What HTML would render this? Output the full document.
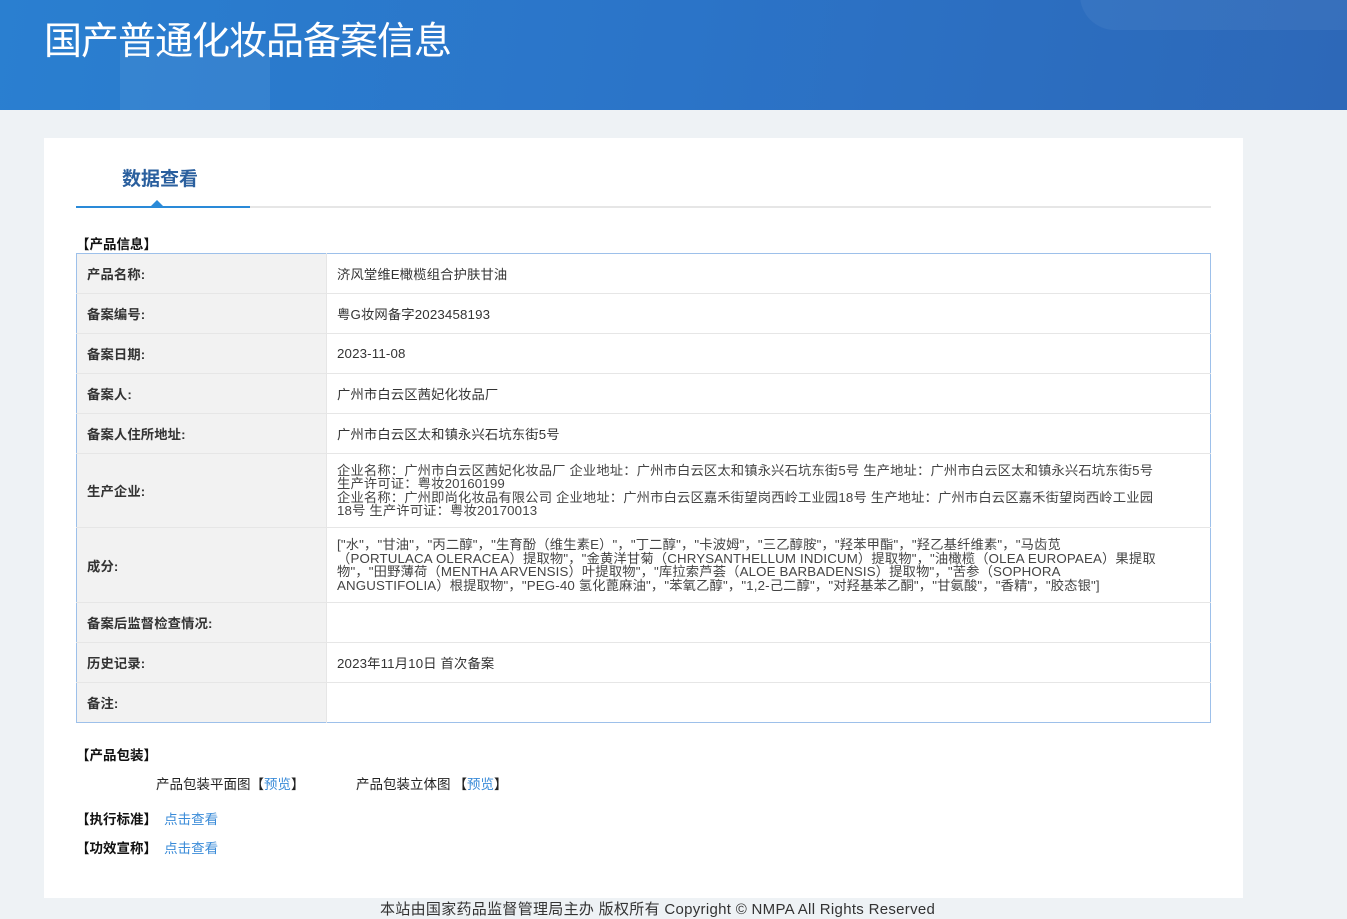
<!DOCTYPE html>
<html><head><meta charset="utf-8"><style>
*{margin:0;padding:0;box-sizing:border-box}
body{width:1347px;height:914px;overflow:hidden;background:#eef2f5;font-family:"Liberation Sans","Noto Sans CJK SC",sans-serif;color:#333;position:relative}
.hdr{position:absolute;left:0;top:0;width:1347px;height:110px;background:linear-gradient(100deg,#2a7fd0 0%,#2b74c8 50%,#2d68b8 100%);overflow:hidden}
.hdr h1{position:absolute;left:44px;top:10px;font-size:38px;font-weight:normal;color:#fff;font-family:"Noto Sans CJK SC",sans-serif;letter-spacing:-1px}
.card{position:absolute;left:44px;top:138px;width:1199px;height:760px;background:#fff}
.tab{position:absolute;left:122px;top:164px;font-size:19px;font-weight:bold;color:#2a5f9e;font-family:"Noto Sans CJK SC",sans-serif}
.line{position:absolute;left:76px;top:206px;width:1135px;height:2px;background:#e6e6e6}
.line2{position:absolute;left:76px;top:206px;width:174px;height:2px;background:#2a8ad8}
.tri{position:absolute;left:151px;top:200px;width:0;height:0;border-left:6px solid transparent;border-right:6px solid transparent;border-bottom:6px solid #2a8ad8}
.sec{position:absolute;left:76px;font-size:13.5px;font-weight:bold;color:#111;font-family:"Noto Sans CJK SC",sans-serif}
table{position:absolute;left:76px;top:253px;width:1135px;border-collapse:collapse;border:1px solid #9dc0ea;font-size:13.3px}
td{border-bottom:1px solid #e6e6e6;padding:0 10px;height:40px;vertical-align:middle;font-family:"Liberation Sans","Noto Sans CJK SC",sans-serif;letter-spacing:0.15px}
td.l{width:250px;background:#f2f2f2;font-weight:bold;color:#333;border-right:1px solid #e6e6e6}
td.m{line-height:13.5px;color:#444}
a{color:#3a8bd8;text-decoration:none}
.txt{position:absolute;font-size:13.5px;color:#222;font-family:"Noto Sans CJK SC",sans-serif}
.foot{position:absolute;left:380px;top:898px;font-size:15px;color:#333;font-family:"Liberation Sans","Noto Sans CJK SC",sans-serif;letter-spacing:0.3px}
</style></head><body>
<div class="hdr"><h1>国产普通化妆品备案信息</h1>
<div style="position:absolute;left:1080px;top:-40px;width:300px;height:70px;border-radius:40px;background:rgba(255,255,255,0.05)"></div>
<div style="position:absolute;left:120px;top:50px;width:150px;height:60px;background:rgba(255,255,255,0.06)"></div></div>
<div class="card"></div>
<div class="tab">数据查看</div>
<div class="line"></div><div class="line2"></div><div class="tri"></div>
<div class="sec" style="top:233px">【产品信息】</div>
<table>
<tr><td class="l">产品名称:</td><td>济风堂维E橄榄组合护肤甘油</td></tr>
<tr><td class="l">备案编号:</td><td>粤G妆网备字2023458193</td></tr>
<tr><td class="l">备案日期:</td><td>2023-11-08</td></tr>
<tr><td class="l">备案人:</td><td>广州市白云区茜妃化妆品厂</td></tr>
<tr><td class="l">备案人住所地址:</td><td>广州市白云区太和镇永兴石坑东街5号</td></tr>
<tr><td class="l" style="height:74px">生产企业:</td><td class="m">企业名称：广州市白云区茜妃化妆品厂 企业地址：广州市白云区太和镇永兴石坑东街5号 生产地址：广州市白云区太和镇永兴石坑东街5号<br>生产许可证：粤妆20160199<br>企业名称：广州即尚化妆品有限公司 企业地址：广州市白云区嘉禾街望岗西岭工业园18号 生产地址：广州市白云区嘉禾街望岗西岭工业园<br>18号 生产许可证：粤妆20170013</td></tr>
<tr><td class="l" style="height:75px">成分:</td><td class="m">["水"，"甘油"，"丙二醇"，"生育酚（维生素E）"，"丁二醇"，"卡波姆"，"三乙醇胺"，"羟苯甲酯"，"羟乙基纤维素"，"马齿苋<br>（PORTULACA OLERACEA）提取物"，"金黄洋甘菊（CHRYSANTHELLUM INDICUM）提取物"，"油橄榄（OLEA EUROPAEA）果提取<br>物"，"田野薄荷（MENTHA ARVENSIS）叶提取物"，"库拉索芦荟（ALOE BARBADENSIS）提取物"，"苦参（SOPHORA<br>ANGUSTIFOLIA）根提取物"，"PEG-40 氢化蓖麻油"，"苯氧乙醇"，"1,2-己二醇"，"对羟基苯乙酮"，"甘氨酸"，"香精"，"胶态银"]</td></tr>
<tr><td class="l">备案后监督检查情况:</td><td></td></tr>
<tr><td class="l">历史记录:</td><td>2023年11月10日 首次备案</td></tr>
<tr><td class="l" style="border-bottom:none">备注:</td><td style="border-bottom:none"></td></tr>
</table>
<div class="sec" style="top:744px">【产品包装】</div>
<div class="txt" style="left:156px;top:773px">产品包装平面图【<a>预览</a>】</div>
<div class="txt" style="left:356px;top:773px">产品包装立体图 【<a>预览</a>】</div>
<div class="sec" style="top:808px">【执行标准】 <a style="font-weight:normal;margin-left:4px">点击查看</a></div>
<div class="sec" style="top:837px">【功效宣称】 <a style="font-weight:normal;margin-left:4px">点击查看</a></div>
<div class="foot">本站由国家药品监督管理局主办 版权所有 Copyright © NMPA All Rights Reserved</div>
</body></html>
